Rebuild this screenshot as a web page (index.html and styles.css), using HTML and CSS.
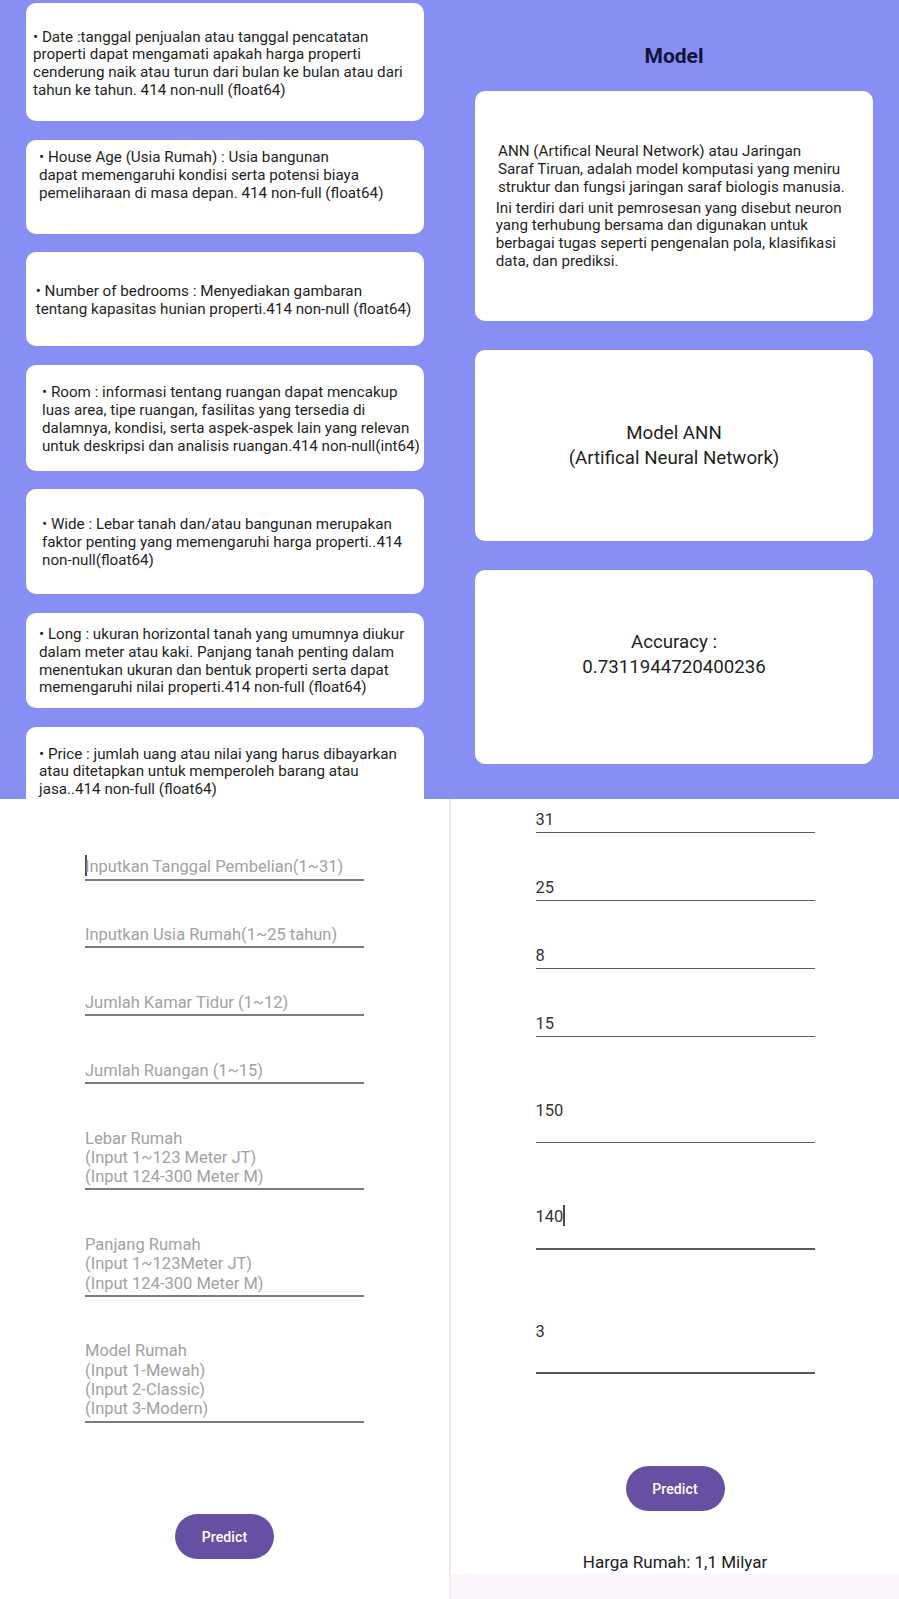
FILE: index.html
```html
<!DOCTYPE html>
<html lang="id">
<head>
<meta charset="utf-8">
<title>Prediksi Harga Rumah</title>
<link rel="stylesheet" href="styles.css">
</head>
<body>
<section class="top">
  <div class="info-col">
    <div class="card info info-1">• Date :tanggal penjualan atau tanggal pencatatan<br>properti dapat mengamati apakah harga properti<br>cenderung naik atau turun dari bulan ke bulan atau dari<br>tahun ke tahun. 414 non-null (float64)</div>
    <div class="card info info-2">• House Age (Usia Rumah) : Usia bangunan<br>dapat memengaruhi kondisi serta potensi biaya<br>pemeliharaan di masa depan. 414 non-full (float64)</div>
    <div class="card info info-3">• Number of bedrooms : Menyediakan gambaran<br>tentang kapasitas hunian properti.414 non-null (float64)</div>
    <div class="card info info-4">• Room : informasi tentang ruangan dapat mencakup<br>luas area, tipe ruangan, fasilitas yang tersedia di<br>dalamnya, kondisi, serta aspek-aspek lain yang relevan<br>untuk deskripsi dan analisis ruangan.414 non-null(int64)</div>
    <div class="card info info-5">• Wide : Lebar tanah dan/atau bangunan merupakan<br>faktor penting yang memengaruhi harga properti..414<br>non-null(float64)</div>
    <div class="card info info-6">• Long : ukuran horizontal tanah yang umumnya diukur<br>dalam meter atau kaki. Panjang tanah penting dalam<br>menentukan ukuran dan bentuk properti serta dapat<br>memengaruhi nilai properti.414 non-full (float64)</div>
    <div class="card info info-7">• Price : jumlah uang atau nilai yang harus dibayarkan<br>atau ditetapkan untuk memperoleh barang atau<br>jasa..414 non-full (float64)</div>
  </div>
  <div class="model-col">
    <h1 class="model-title">Model</h1>
    <div class="card desc-card">
      <p class="desc desc-1">ANN (Artifical Neural Network) atau Jaringan<br>Saraf Tiruan, adalah model komputasi yang meniru<br>struktur dan fungsi jaringan saraf biologis manusia.</p>
      <p class="desc desc-2">Ini terdiri dari unit pemrosesan yang disebut neuron<br>yang terhubung bersama dan digunakan untuk<br>berbagai tugas seperti pengenalan pola, klasifikasi<br>data, dan prediksi.</p>
    </div>
    <div class="card name-card">Model ANN<br>(Artifical Neural Network)</div>
    <div class="card acc-card">Accuracy :<br>0.7311944720400236</div>
  </div>
</section>
<section class="bottom">
  <div class="form form-left">
    <div class="field hint"><span class="cursor cursor-lead"></span>Inputkan Tanggal Pembelian(1~31)</div>
    <div class="field hint">Inputkan Usia Rumah(1~25 tahun)</div>
    <div class="field hint">Jumlah Kamar Tidur (1~12)</div>
    <div class="field hint">Jumlah Ruangan (1~15)</div>
    <div class="field hint">Lebar Rumah<br>(Input 1~123 Meter JT)<br>(Input 124-300 Meter M)</div>
    <div class="field hint">Panjang Rumah<br>(Input 1~123Meter JT)<br>(Input 124-300 Meter M)</div>
    <div class="field hint">Model Rumah<br>(Input 1-Mewah)<br>(Input 2-Classic)<br>(Input 3-Modern)</div>
    <button class="predict predict-left" type="button">Predict</button>
  </div>
  <div class="form form-right">
    <div class="value">31</div>
    <div class="value">25</div>
    <div class="value">8</div>
    <div class="value">15</div>
    <div class="value value-tall value-5">150</div>
    <div class="value value-tall value-6 value-focus">140<span class="cursor"></span></div>
    <div class="value value-7 value-focus">3</div>
    <button class="predict predict-right" type="button">Predict</button>
    <p class="result">Harga Rumah: 1,1 Milyar</p>
    <div class="nav-strip"></div>
  </div>
</section>
</body>
</html>
```

FILE: styles.css
```css
* { box-sizing: border-box; }

body {
  margin: 0;
  width: 899px;
  font-family: Roboto, "Noto Sans", Arial, sans-serif;
  background: #ffffff;
  color: #1f1f1f;
}

/* ---------- top half ---------- */
.top {
  display: grid;
  grid-template-columns: 450px 449px;
  height: 799px;
  overflow: hidden;
  background: #878ff4;
}

.info-col {
  padding: 3px 26px 0 26px;
  display: flex;
  flex-direction: column;
  gap: 18.6px;
}

.card {
  background: #ffffff;
  border-radius: 10px;
  flex: none;
}

.info {
  font-size: 15.2px;
  line-height: 17.8px;
  white-space: nowrap;
  color: #1f1f1f;
}

.info-1 { height: 118px; padding: 25.5px 0 0 7px; }
.info-2 { height: 94px; padding: 9.5px 0 0 13px; }
.info-3 { height: 94px; padding: 31px 0 0 9.7px; }
.info-4 { height: 106px; padding: 19.5px 0 0 16px; }
.info-5 { height: 105px; padding: 27px 0 0 16px; }
.info-6 { height: 95px; padding: 13px 0 0 13px; }
.info-7 { height: 110px; padding: 19px 0 0 13px; }

.model-col {
  padding: 43.5px 26px 0 25px;
  display: flex;
  flex-direction: column;
}

.model-title {
  margin: 0 0 23.4px;
  font-size: 21px;
  line-height: 24.6px;
  font-weight: 700;
  text-align: center;
  color: #12143a;
}

.desc-card {
  height: 230px;
  padding-top: 51.5px;
}

.desc {
  margin: 0;
  font-size: 15.2px;
  line-height: 17.8px;
  white-space: nowrap;
  color: #1f1f1f;
}

.desc-1 { padding-left: 23px; }
.desc-2 { padding-left: 20.7px; margin-top: 3.2px; }

.name-card {
  height: 191px;
  margin-top: 29px;
  display: flex;
  align-items: center;
  justify-content: center;
  text-align: center;
  font-size: 18.7px;
  line-height: 24.7px;
  color: #1f1f1f;
}

.acc-card {
  height: 194px;
  margin-top: 29px;
  padding-top: 59.8px;
  text-align: center;
  font-size: 18.7px;
  line-height: 25px;
  color: #1f1f1f;
}

/* ---------- bottom half ---------- */
.bottom {
  display: grid;
  grid-template-columns: 450px 449px;
  height: 800px;
}

.form {
  display: flex;
  flex-direction: column;
  align-items: center;
}

.form-left {
  border-right: 1px solid #ececec;
  padding-top: 58.4px;
}

.form-right {
  border-left: 1px solid #ececec;
  padding-top: 10.7px;
}

.field,
.value {
  width: 279px;
  font-size: 16.5px;
  line-height: 19.3px;
  white-space: nowrap;
}

.hint {
  color: #a2a2a2;
  padding-bottom: 2px;
  border-bottom: 2px solid #7c7c7c;
}

.hint + .hint { margin-top: 44.5px; }

.cursor {
  display: inline-block;
  width: 2px;
  height: 21.5px;
  margin-top: -3px;
  vertical-align: -4px;
  background: #4a4a4a;
}

.cursor-lead { margin-right: -2px; }

.value {
  color: #333333;
  padding-bottom: 2.7px;
  border-bottom: 1px solid #5e5e5e;
}

.value + .value { margin-top: 45.2px; }

.value-5 { margin-top: 63.7px !important; padding-bottom: 21.7px; }
.value-6 { margin-top: 64.3px !important; padding-bottom: 21.4px; }
.value-7 { margin-top: 71.7px !important; padding-bottom: 31.6px; }

.value-focus { border-bottom: 2px solid #5a5a5a; }

.predict {
  width: 99px;
  height: 45px;
  border: none;
  border-radius: 23px;
  background: #6750a4;
  color: #ffffff;
  font-family: Roboto, "Noto Sans", Arial, sans-serif;
  font-size: 14px;
  font-weight: 500;
  letter-spacing: 0.1px;
  padding: 0;
}

.predict-left { margin-top: 91.7px; }
.predict-right { margin-top: 91.7px; }

.result {
  margin: 42.2px 0 0;
  font-size: 17px;
  line-height: 19.9px;
  color: #1c1b1f;
}

.nav-strip {
  margin-top: auto;
  align-self: stretch;
  height: 25px;
  background: #fcf6fc;
}
```
